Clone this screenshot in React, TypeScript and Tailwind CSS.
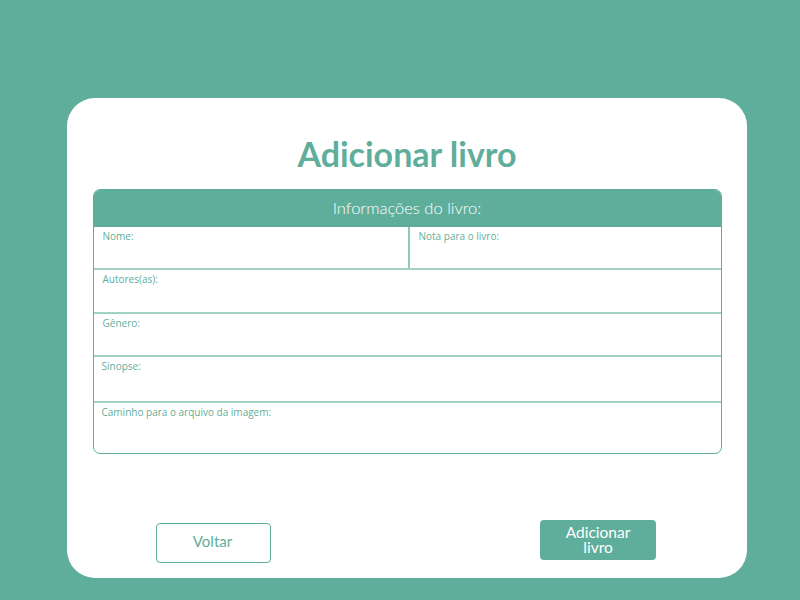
const font = { fontFamily: '"Lato", "Open Sans", sans-serif' };

function Field({ label, className = "" }: { label: string; className?: string }) {
  return (
    <div className={`px-[9px] pt-[3px] ${className}`}>
      <span className="block text-[10px] leading-[12px] text-[#5fae9c]" style={{ fontFamily: '"Open Sans", sans-serif' }}>
        {label}
      </span>
    </div>
  );
}

export default function App() {
  return (
    <div className="w-[800px] h-[600px] bg-[#5fae9c] flex items-start pl-[67px] pt-[98px]" style={font}>
      <div className="w-[680px] h-[480px] bg-white rounded-[28px] flex flex-col items-center">
        <h1 className="mt-[35px] text-[34px] leading-[42px] font-bold text-[#5fae9c]">
          Adicionar livro
        </h1>
        <div className="mt-[14px] w-[629px] rounded-[7px] border-[1.5px] border-[#5fae9c] overflow-hidden">
          <div className="h-[37px] bg-[#5fae9c] flex items-center justify-center">
            <span className="text-[16.5px] text-white font-light">Informações do livro:</span>
          </div>
          <div className="flex h-[43px] border-b-2 border-[#9fd2c5]">
            <Field label="Nome:" className="w-[316px] border-r-2 border-[#8fc9bb]" />
            <Field label="Nota para o livro:" className="flex-1" />
          </div>
          <Field label="Autores(as):" className="h-[44px] border-b-2 border-[#9fd2c5]" />
          <Field label="Gênero:" className="h-[43px] border-b-2 border-[#9fd2c5]" />
          <Field label="Sinopse:" className="h-[46px] border-b-2 border-[#9fd2c5] !px-[8px]" />
          <Field label="Caminho para o arquivo da imagem:" className="h-[50px] !px-[8px]" />
        </div>
        <div className="mt-[66px] w-full flex justify-between pl-[89px] pr-[91px] items-start">
          <button className="mt-[3px] w-[115px] h-[40px] rounded-[4px] border-[1.5px] border-[#5fae9c] text-[15px] leading-[15px] pb-[4px] pr-[2px] text-[#5fae9c] bg-white">
            Voltar
          </button>
          <button className="w-[116px] h-[40px] rounded-[4px] bg-[#5fae9c] text-white text-[15.5px] leading-[15px] flex items-center justify-center text-center px-[20px] pb-[1px]">
            Adicionar livro
          </button>
        </div>
      </div>
    </div>
  );
}
